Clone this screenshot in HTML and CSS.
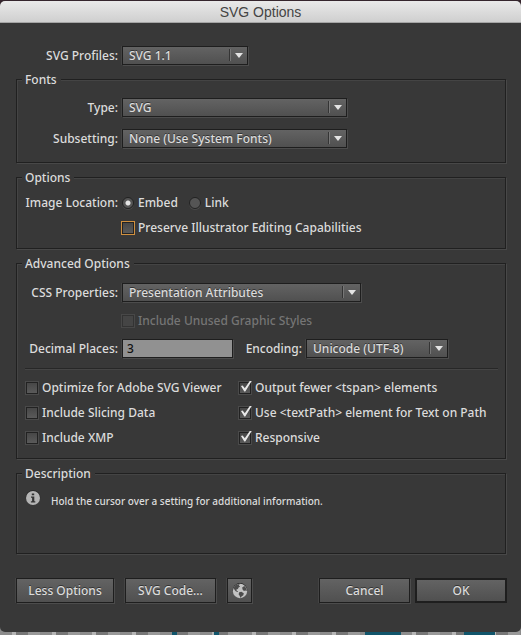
FILE: index.html
```html
<!DOCTYPE html>
<html lang="en">
<head>
<meta charset="utf-8">
<meta name="viewport" content="width=device-width, initial-scale=1">
<title>SVG Options</title>
<link rel="stylesheet" href="styles.css">
</head>
<body>
<main class="dialog">
  <header class="titlebar"><h1>SVG Options</h1></header>
  <form class="content">
    <div class="row profiles">
      <label class="label" for="profile">SVG Profiles:</label>
      <span class="dropdown w-small"><select id="profile"><option>SVG 1.1</option></select></span>
    </div>

    <fieldset class="fonts">
      <legend>Fonts</legend>
      <div class="row">
        <label class="label" for="type">Type:</label>
        <span class="dropdown w-large"><select id="type"><option>SVG</option></select></span>
      </div>
      <div class="row">
        <label class="label" for="subsetting">Subsetting:</label>
        <span class="dropdown w-large"><select id="subsetting"><option>None (Use System Fonts)</option></select></span>
      </div>
    </fieldset>

    <fieldset class="options">
      <legend>Options</legend>
      <div class="row" role="radiogroup" aria-labelledby="location">
        <span class="label" id="location">Image Location:</span>
        <div class="radios">
          <label class="choice"><input type="radio" name="location" checked>Embed</label>
          <label class="choice"><input type="radio" name="location">Link</label>
        </div>
      </div>
      <div class="row indent">
        <label class="choice"><input type="checkbox" class="focused">Preserve Illustrator Editing Capabilities</label>
      </div>
    </fieldset>

    <fieldset class="advanced">
      <legend>Advanced Options</legend>
      <div class="row">
        <label class="label" for="css">CSS Properties:</label>
        <span class="dropdown w-css"><select id="css"><option>Presentation Attributes</option></select></span>
      </div>
      <div class="row indent">
        <label class="choice disabled"><input type="checkbox" disabled>Include Unused Graphic Styles</label>
      </div>
      <div class="row">
        <label class="label" for="places">Decimal Places:</label>
        <input class="number" id="places" type="text" value="3">
        <label class="encoding" for="encoding">Encoding:</label>
        <span class="dropdown w-encoding"><select id="encoding"><option>Unicode (UTF-8)</option></select></span>
      </div>
      <hr>
      <div class="checks">
        <label class="choice"><input type="checkbox">Optimize for Adobe SVG Viewer</label>
        <label class="choice"><input type="checkbox" checked>Output fewer &lt;tspan&gt; elements</label>
        <label class="choice"><input type="checkbox">Include Slicing Data</label>
        <label class="choice"><input type="checkbox" checked>Use &lt;textPath&gt; element for Text on Path</label>
        <label class="choice"><input type="checkbox">Include XMP</label>
        <label class="choice"><input type="checkbox" checked>Responsive</label>
      </div>
    </fieldset>

    <fieldset class="description">
      <legend>Description</legend>
      <div class="hint">
        <svg width="16" height="16" viewBox="0 0 16 16" aria-hidden="true">
          <circle cx="8" cy="7.4" r="7.2" fill="#242424"/>
          <circle cx="8" cy="8" r="7" fill="#b4b4b4"/>
          <path d="M6.8 3.4h2.4v1.9H6.8zM6 6.6h3.3v4.6h1v1.2H5.900v-1.200h1.200V7.800H6z" fill="#333"/>
        </svg>
        <p>Hold the cursor over a setting for additional information.</p>
      </div>
    </fieldset>

    <footer class="actions">
      <button type="button" class="less">Less Options</button>
      <button type="button" class="code">SVG Code...</button>
      <button type="button" class="globe" aria-label="Preview in browser">
        <svg width="16" height="16" viewBox="0 0 16 16" aria-hidden="true">
          <circle cx="8" cy="7.3" r="7.2" fill="#242424"/>
          <circle cx="8" cy="8" r="7.2" fill="#c2c2c2"/>
          <path d="M1.600 4.900 3.300 2.600 5.800 1.200l2 .1-1 1.200 1.300 1-1.500 1-.7 1.500-1.500.5.300 1.200 1.400.5-.6.8-1.800-.8-1.200-1.400z" fill="#4c4c4c"/>
          <path d="M7.200 9.300 9.300 8.700l2.500 1.500-.5 2-1.800 1.200-.9 1.600-1-2.200-1-1.600z" fill="#4c4c4c"/>
          <path d="M10.300 4.300l2.100-1.300 1.900 2.300.6 2.800-1.700-.6-1.300.4-1.500-1.600z" fill="#4c4c4c"/>
        </svg>
      </button>
      <span class="spacer"></span>
      <button type="button" class="cancel">Cancel</button>
      <button type="submit" class="ok">OK</button>
    </footer>
  </form>
</main>
</body>
</html>
```
FILE: styles.css
```css
* { box-sizing: border-box; }

html {
  min-height: 100%;
  background:
    linear-gradient(#35252d, #35252d) top / 100% 12px no-repeat,
    linear-gradient(90deg, transparent 33%, #11556b 33% 34%, transparent 34% 41%, #11556b 41% 42%, transparent 42% 70%, #11556b 70% 77%, transparent 77% 89%, #11556b 89% 95%, transparent 95%),
    repeating-linear-gradient(90deg, #8c8c8c 0 12px, #b4b4b4 12px 16px, #777 16px 28px, #999 28px 40px);
}

body {
  margin: 0;
  padding: 1px 0 2px;
  font: 500 12px/15px "Noto Sans", "Open Sans", sans-serif;
  color: #dcdcdc;
}

.dialog {
  border-radius: 5px;
  overflow: hidden;
  background: #383838;
}

.titlebar {
  height: 22px;
  background: linear-gradient(#e9e9e9, #cfcfcf);
  border-bottom: 1px solid #a5a5a5;
}

h1 {
  margin: 0;
  font: 400 14px/23px "Liberation Sans", sans-serif;
  color: #444;
  text-align: center;
}

.content { padding: 23px 15px 29px 16px; }

.row {
  display: flex;
  align-items: center;
  min-height: 19px;
}

.label {
  width: 96px;
  margin-right: 4px;
  text-align: right;
  white-space: nowrap;
}

.profiles { padding-left: 6px; margin-bottom: 7px; }

fieldset {
  display: flex;
  flex-direction: column;
  min-width: 0;
  margin: 0 0 7px;
  padding: 11px 5px 14px;
  border: 1px solid #202020;
  box-shadow: 1px 1px 0 #484848, inset 1px 1px 0 #444;
}

legend {
  padding: 0 4px 0 3px;
  background: #383838;
}

.fonts { gap: 12px; }
.options { gap: 6px; padding: 8px 5px 11px; }
.advanced { gap: 9px; padding: 12px 5px 13px; }

.dropdown {
  position: relative;
  flex: none;
}

.w-small { width: 126px; }
.w-large { width: 225px; }
.w-css { width: 239px; }
.w-encoding { width: 142px; }

.dropdown::before {
  content: "";
  position: absolute;
  top: 3px;
  right: 17px;
  width: 2px;
  height: 12px;
  background: linear-gradient(90deg, #343434 50%, #777 50%);
  pointer-events: none;
}

.dropdown::after {
  content: "";
  position: absolute;
  top: 7px;
  right: 5px;
  border: 4px solid transparent;
  border-top: 5px solid #e4e4e4;
  border-bottom: 0;
  pointer-events: none;
}

select, button, .number {
  margin: 0;
  font: inherit;
  color: inherit;
  border: 1px solid #1e1e1e;
  border-radius: 0;
  background: linear-gradient(#636363, #505050);
  box-shadow: 1px 1px 0 #4c4c4c, -1px 0 0 #444;
}

select, button { text-shadow: 0 -1px 0 #333; }

select {
  display: block;
  appearance: none;
  width: 100%;
  height: 19px;
  padding: 0 20px 0 6px;
  line-height: 17px;
}

.number {
  width: 111px;
  height: 19px;
  padding: 0 4px;
  color: #111;
  background: #919191;
}

.encoding { margin: 0 4px 0 11px; width: 58px; white-space: nowrap; text-align: right; }

.radios { display: flex; gap: 11px; }

.choice {
  display: flex;
  align-items: center;
  gap: 4px;
  white-space: nowrap;
}

.indent { padding-left: 100px; }

.choice input {
  appearance: none;
  flex: none;
  position: relative;
  width: 12px;
  height: 12px;
  margin: 0;
  border: 1px solid #222;
  background: linear-gradient(#474747, #5a5a5a);
  box-shadow: 0 0 0 1px #4a4a4a;
  outline: none;
}

.choice input[type="radio"] {
  border-radius: 50%;
  background: #555;
  box-shadow: 0 1px 0 #4a4a4a;
}

.choice input[type="radio"]:checked {
  background: radial-gradient(circle, #e4e4e4 0 2px, #555 3px);
}

.choice input[type="checkbox"]:checked::after {
  content: "";
  position: absolute;
  left: 0;
  top: -2px;
  width: 12px;
  height: 11px;
  background: #e8e8e8;
  clip-path: polygon(8% 50%, 22% 46%, 40% 70%, 84% 0, 100% 0, 44% 100%, 36% 100%);
}

.choice input.focused { box-shadow: 0 0 0 1px #d0903f; }

.disabled { color: #757575; }
.choice.disabled input { background: #454545; border-color: #333; box-shadow: 0 0 0 1px #484848; }

hr {
  width: auto;
  height: 2px;
  margin: 1px 2px 1px 3px;
  border: 0;
  background: linear-gradient(#272727 50%, #454545 50%);
}

.checks {
  display: grid;
  grid-template-columns: 213px 1fr;
  row-gap: 10px;
  padding-left: 4px;
}

.description { min-height: 88px; padding: 9px 5px; margin-bottom: 24px; }

.hint {
  display: flex;
  align-items: flex-start;
  gap: 10px;
  padding-left: 3px;
  font-size: 10px;
}

.hint p { margin: 4px 0 0; }

.actions { display: flex; align-items: center; margin-right: -1px; }

button {
  height: 25px;
  padding: 0;
  line-height: 21px;
}

.less { width: 98px; margin-right: 11px; }
.code { width: 91px; margin-right: 11px; }
.globe { width: 25px; display: flex; align-items: center; justify-content: center; }
.spacer { flex: 1; }
.cancel { width: 91px; margin-right: 5px; }
.ok { width: 92px; border-width: 2px; box-shadow: none; }
```
